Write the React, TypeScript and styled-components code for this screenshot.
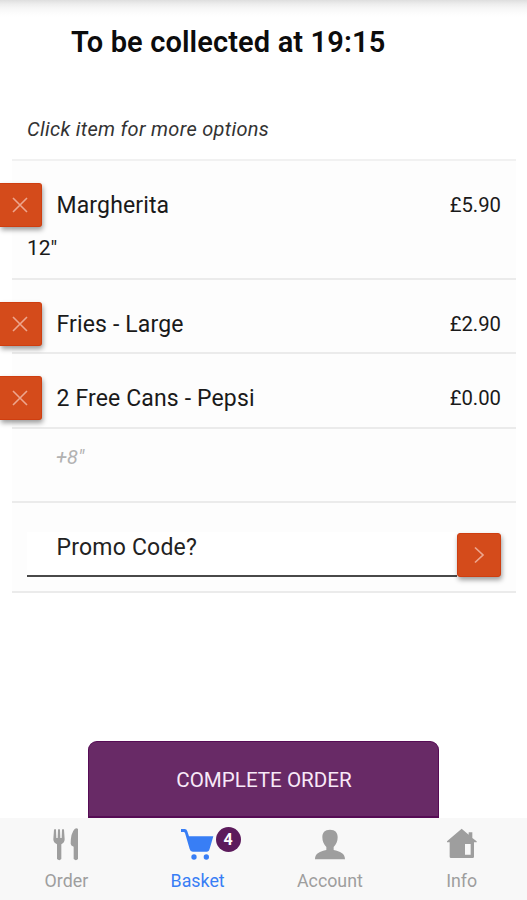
import React from "react";
import styled, { createGlobalStyle } from "styled-components";

const GlobalStyle = createGlobalStyle`
  *, *::before, *::after { box-sizing: border-box; }
  body { margin: 0; background: #fff; font-family: Roboto, "Liberation Sans", sans-serif; color: #1a1a1a; }
  button, input { font-family: inherit; margin: 0; }
`;

const Screen = styled.div`
  display: flex;
  flex-direction: column;
  height: 900px;
  overflow: hidden;
  background: #fff;
`;

const Header = styled.header`
  flex: none;
  height: 99px;
  padding: 24px 0 0 71px;
  background: linear-gradient(#dedede 0, #ededed 4px, #f6f6f6 8px, #fcfcfc 13px, #fff 17px);
`;

const Title = styled.h1`
  margin: 0;
  font-size: 29px;
  line-height: 36px;
  font-weight: 600;
  letter-spacing: 0.13px;
  color: #0c0c0c;
  white-space: nowrap;
`;

const List = styled.main`
  flex: 1;
  margin: 0 11px 0 12px;
`;

const Hint = styled.p`
  margin: 0;
  height: 62px;
  padding: 18px 15px 0;
  font-size: 20px;
  line-height: 24px;
  font-style: italic;
  letter-spacing: 0.3px;
  color: #333;
  border-bottom: 2px solid #f1f1f1;
`;

const Row = styled.section<{ $height: number }>`
  height: ${(p) => p.$height}px;
  padding: 22px 15px 0 0;
  background: #fdfdfd;
  border-bottom: 2px solid #ebebeb;
`;

const ItemLine = styled.div`
  display: flex;
  align-items: center;
  height: 44px;
`;

const SquareButton = styled.button<{ $edge?: "left" }>`
  display: flex;
  flex: none;
  align-items: center;
  justify-content: center;
  width: ${(p) => (p.$edge ? 42 : 44)}px;
  height: 44px;
  padding: 0 ${(p) => (p.$edge ? 1 : 0)}px 0 0;
  margin-left: ${(p) => (p.$edge ? -12 : 0)}px;
  border: 1px solid #cf3e10;
  border-left-width: ${(p) => (p.$edge ? 0 : 1)}px;
  border-radius: ${(p) => (p.$edge ? "0 3px 3px 0" : "3px")};
  background: #d44b1b;
  box-shadow: 1px 3px 5px rgba(0, 0, 0, 0.38);
`;

const ItemName = styled.span`
  flex: 1;
  margin-left: 14.5px;
  font-size: 23px;
  letter-spacing: 0.14px;
  white-space: nowrap;
`;

const Price = styled.span`
  font-size: 20.3px;
`;

const Size = styled.div`
  padding: 9px 0 0 15px;
  font-size: 21px;
  line-height: 24px;
`;

const Extra = styled.div`
  padding-left: 44px;
  margin-top: -6px;
  font-size: 20px;
  line-height: 24px;
  font-style: italic;
  color: #b2b2b2;
`;

const PromoLine = styled.form`
  display: flex;
  align-items: flex-end;
  height: 45px;
  margin: 7px 0 0 15px;
`;

const PromoInput = styled.input`
  flex: 1;
  min-width: 0;
  height: 45px;
  padding: 0 0 12px 29.5px;
  border: 0;
  border-bottom: 2px solid #494949;
  border-radius: 0;
  background: #fff;
  outline: none;
  font-size: 23px;
  letter-spacing: 0.2px;
  &::placeholder { color: #222; opacity: 1; }
`;

const CompleteButton = styled.button`
  flex: none;
  align-self: flex-start;
  width: 351px;
  height: 77px;
  margin-left: 88px;
  padding: 2px 0 0 1px;
  border: 1px solid #560c55;
  border-bottom-width: 2px;
  border-radius: 9px 9px 0 0;
  background: #682a66;
  color: #f8e9f8;
  font-size: 20.6px;
`;

const TabBar = styled.nav`
  display: grid;
  flex: none;
  grid-template-columns: repeat(4, 1fr);
  height: 82px;
  background: #f8f8f8;
`;

const Tab = styled.a<{ $active?: boolean }>`
  display: flex;
  flex-direction: column;
  align-items: center;
  padding: 10px 0 0 ${(p) => (p.$active ? 0 : 1)}px;
  color: ${(p) => (p.$active ? "#387ef5" : "#9e9e9e")};
  font-size: 17.8px;
  line-height: 22px;
`;

const IconBox = styled.span`
  position: relative;
  display: flex;
  width: 34px;
  height: 35px;
  margin-bottom: 7px;
`;

const Badge = styled.span`
  position: absolute;
  left: 35px;
  top: -1px;
  width: 25px;
  height: 25px;
  border-radius: 50%;
  background: #5c1b5c;
  color: #fff;
  font-size: 16px;
  font-weight: 700;
  line-height: 25px;
  text-align: center;
`;

const CrossIcon = () => (
  <svg width="16" height="16" viewBox="0 0 16 16" stroke="#eda68e" strokeWidth="1.6">
    <path d="M1 1 15 15M15 1 1 15" />
  </svg>
);

const ChevronIcon = () => (
  <svg width="12" height="18" viewBox="0 0 12 18" fill="none" stroke="#eda68e" strokeWidth="1.7">
    <path d="M2 1.5 10 9 2 16.5" />
  </svg>
);

const CutleryIcon = () => (
  <svg width="34" height="35" viewBox="-3 0 102 105" fill="currentColor">
    <path d="M12 5q4-4 6 0l1 25h4l1-25q3-4 6 0l1 25h4l1-25q3-4 6 0l2 29q0 10-10 15v44q-6 7-13 0V49Q10 44 10 34Z" />
    <path d="M84 3v90q-6 7-13 0V56q-9-3-9-9 0-32 12-44 6-4 10 0Z" />
  </svg>
);

const CartIcon = () => (
  <svg width="34" height="35" viewBox="2 0 102 105" fill="currentColor">
    <path d="M2 3h11q6 0 8 7l5 15h73L88 62q-2 9-9 9H37q-7 0-9-8L14 15q-1-3-4-3H2Z" />
    <circle cx="41" cy="87" r="8" />
    <circle cx="78" cy="87" r="8" />
  </svg>
);

const PersonIcon = () => (
  <svg width="34" height="35" viewBox="0 0 102 105" fill="currentColor">
    <path d="M51 5c16 0 23 9 23 23 0 13-5 22-12 29v9c19 4 34 10 34 28H6c0-18 15-24 34-28v-9C33 50 28 41 28 28 28 14 35 5 51 5Z" />
  </svg>
);

const HouseIcon = () => (
  <svg width="34" height="35" viewBox="0 0 102 105" fill="currentColor" fillRule="evenodd">
    <path d="M50 2 71 20v-7h11v17l13 10v3h-8v43q0 4-4 4H18q-4 0-4-4V43H6v-3ZM60 48v32h17V48Z" />
  </svg>
);

const RemoveButton = () => (
  <SquareButton $edge="left" type="button" aria-label="Remove item">
    <CrossIcon />
  </SquareButton>
);

const items = [
  { name: "Margherita", price: "£5.90", size: '12"', height: 119 },
  { name: "Fries - Large", price: "£2.90", height: 74 },
  { name: "2 Free Cans - Pepsi", price: "£0.00", height: 75 },
];

export default function App() {
  return (
    <Screen>
      <GlobalStyle />
      <Header>
        <Title>To be collected at 19:15</Title>
      </Header>
      <List>
        <Hint>Click item for more options</Hint>
        {items.map((item) => (
          <Row key={item.name} $height={item.height}>
            <ItemLine>
              <RemoveButton />
              <ItemName>{item.name}</ItemName>
              <Price>{item.price}</Price>
            </ItemLine>
            {item.size && <Size>{item.size}</Size>}
          </Row>
        ))}
        <Row $height={74}>
          <Extra>+8"</Extra>
        </Row>
        <Row $height={90}>
          <PromoLine>
            <PromoInput placeholder="Promo Code?" aria-label="Promo Code?" />
            <SquareButton type="button" aria-label="Apply promo code">
              <ChevronIcon />
            </SquareButton>
          </PromoLine>
        </Row>
      </List>
      <CompleteButton type="button">COMPLETE ORDER</CompleteButton>
      <TabBar>
        <Tab>
          <IconBox><CutleryIcon /></IconBox>
          Order
        </Tab>
        <Tab $active>
          <IconBox>
            <CartIcon />
            <Badge>4</Badge>
          </IconBox>
          Basket
        </Tab>
        <Tab>
          <IconBox><PersonIcon /></IconBox>
          Account
        </Tab>
        <Tab>
          <IconBox><HouseIcon /></IconBox>
          Info
        </Tab>
      </TabBar>
    </Screen>
  );
}
